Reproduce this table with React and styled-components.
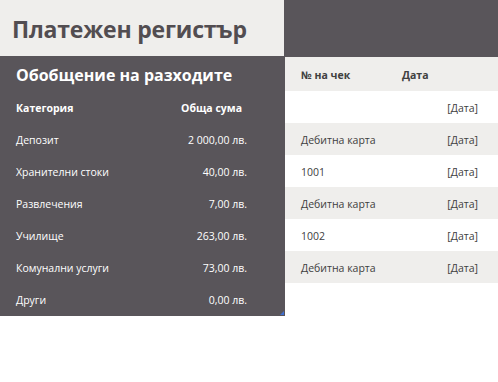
import styled, { createGlobalStyle } from "styled-components";

const GlobalStyle = createGlobalStyle`
  html, body {
    margin: 0;
    padding: 0;
    background: #ffffff;
  }
  body {
    font-family: "Open Sans", "Noto Sans", sans-serif;
  }
`;

const DARK = "#59555a";
const LIGHT = "#efeeec";

const summary = [
  { name: "Депозит", amount: "2 000,00 лв." },
  { name: "Хранителни стоки", amount: "40,00 лв." },
  { name: "Развлечения", amount: "7,00 лв." },
  { name: "Училище", amount: "263,00 лв." },
  { name: "Комунални услуги", amount: "73,00 лв." },
  { name: "Други", amount: "0,00 лв." },
];

const payments = [
  { check: "", date: "[Дата]" },
  { check: "Дебитна карта", date: "[Дата]" },
  { check: "1001", date: "[Дата]" },
  { check: "Дебитна карта", date: "[Дата]" },
  { check: "1002", date: "[Дата]" },
  { check: "Дебитна карта", date: "[Дата]" },
];

const App = () => {
  return (
    <>
      <GlobalStyle />
      <Sheet>
        <TitleCell>
          <Title>Платежен регистър</Title>
        </TitleCell>
        <TopFill />
        <SummaryPanel>
          <PanelTitle>Обобщение на разходите</PanelTitle>
          <SummaryRow $head>
            <span>Категория</span>
            <Amount $head>Обща сума</Amount>
          </SummaryRow>
          {summary.map((row) => (
            <SummaryRow key={row.name}>
              <span>{row.name}</span>
              <Amount>{row.amount}</Amount>
            </SummaryRow>
          ))}
          <ResizeHandle />
        </SummaryPanel>
        <Register>
          <RegisterRow $head>
            <CheckCell>№ на чек</CheckCell>
            <DateCell $head>Дата</DateCell>
          </RegisterRow>
          {payments.map((row, i) => (
            <RegisterRow key={i} $striped={i % 2 === 1}>
              <CheckCell>{row.check}</CheckCell>
              <DateCell>{row.date}</DateCell>
            </RegisterRow>
          ))}
        </Register>
      </Sheet>
    </>
  );
};

export default App;

const Sheet = styled.div`
  display: grid;
  grid-template-columns: 284px 1fr;
  grid-template-rows: 56px auto;
  width: 498px;
  background: ${DARK};
`;

const TitleCell = styled.div`
  background: ${LIGHT};
  display: flex;
  align-items: center;
  padding: 2px 0 0 12px;
`;

const Title = styled.h1`
  margin: 0;
  font-size: 23px;
  font-weight: 700;
  color: #524d51;
  letter-spacing: -0.2px;
`;

const TopFill = styled.div`
  background: ${DARK};
`;

const SummaryPanel = styled.div`
  position: relative;
  background: ${DARK};
  width: 285px;
  padding-bottom: 1px;
  color: #ffffff;
`;

const PanelTitle = styled.h2`
  margin: 0;
  height: 35px;
  display: flex;
  align-items: center;
  padding: 2px 0 0 16px;
  box-sizing: border-box;
  font-size: 16px;
  font-weight: 700;
`;

const SummaryRow = styled.div`
  height: 32px;
  box-sizing: border-box;
  display: grid;
  grid-template-columns: 1fr 120px;
  align-items: center;
  padding: 2px 38px 0 16px;
  font-size: 10.5px;
  font-weight: ${(p) => (p.$head ? 700 : 400)};
`;

const Amount = styled.span`
  text-align: right;
  padding-right: ${(p) => (p.$head ? "5px" : "0")};
`;

const ResizeHandle = styled.div`
  position: absolute;
  right: 1px;
  bottom: 1px;
  width: 0;
  height: 0;
  border-left: 4px solid transparent;
  border-bottom: 4px solid #3f6fd0;
`;

const Register = styled.div`
  margin: 1px 0 0 1px;
  background: #ffffff;
`;

const RegisterRow = styled.div`
  display: grid;
  box-sizing: border-box;
  grid-template-columns: 101px 1fr;
  align-items: center;
  height: ${(p) => (p.$head ? "34px" : "32px")};
  padding: 2px 20px 0 16px;
  background: ${(p) => (p.$head || p.$striped ? LIGHT : "#ffffff")};
  color: #404040;
  font-size: 10.5px;
  font-weight: ${(p) => (p.$head ? 700 : 400)};
`;

const CheckCell = styled.span`
  white-space: nowrap;
  color: #404040;
`;

const DateCell = styled.span`
  text-align: ${(p) => (p.$head ? "left" : "right")};
  color: #404040;
`;
